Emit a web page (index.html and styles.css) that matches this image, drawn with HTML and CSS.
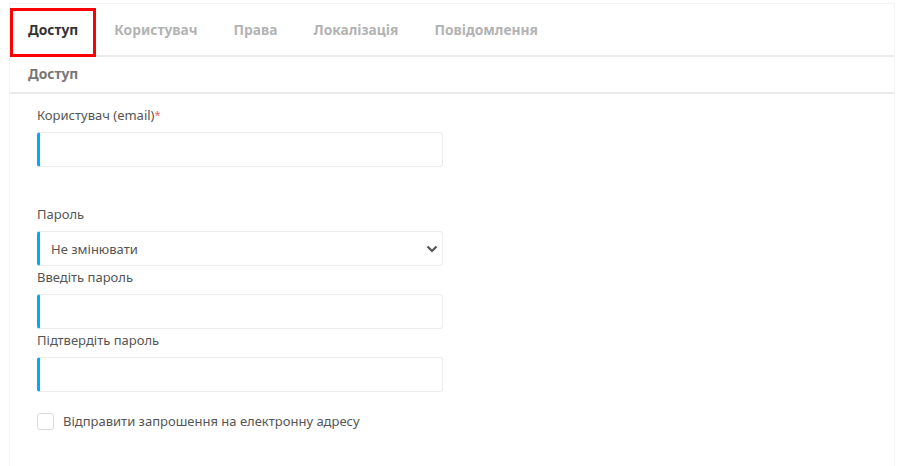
FILE: index.html
```html
<!DOCTYPE html>
<html lang="uk">
  <head>
    <meta charset="UTF-8" />
    <meta name="viewport" content="width=device-width, initial-scale=1.0" />
    <title>Доступ</title>
    <link rel="stylesheet" href="styles.css">
  </head>
  <body>
    <div class="card">
      <ul class="tabs">
        <li class="tab active">Доступ</li>
        <li class="tab">Користувач</li>
        <li class="tab">Права</li>
        <li class="tab">Локалізація</li>
        <li class="tab">Повідомлення</li>
      </ul>
      <div class="section-title">Доступ</div>
      <form class="form">
        <label class="field-label">Користувач (email)<span class="req">*</span></label>
        <input type="email" class="field" />

        <label class="field-label gap">Пароль</label>
        <div class="select-wrap">
          <select class="field">
            <option>Не змінювати</option>
            <option>Змінити</option>
          </select>
          <svg class="chevron" width="12" height="8" viewBox="0 0 12 8">
            <path d="M1.5 1.5 L6 6 L10.5 1.5" fill="none" stroke="#555" stroke-width="2.2" />
          </svg>
        </div>

        <label class="field-label tight">Введіть пароль</label>
        <input type="password" class="field" />

        <label class="field-label tight">Підтвердіть пароль</label>
        <input type="password" class="field" />

        <label class="check-row">
          <input type="checkbox" class="check" />
          Відправити запрошення на електронну адресу
        </label>
      </form>
    </div>
  </body>
</html>
```

FILE: styles.css
```css
body {
  margin: 0;
  background: #fff;
  font-family: "Noto Sans", "Open Sans", sans-serif;
  font-size: 13px;
  color: #555;
}

.card {
  margin: 3px 0 0 9px;
  width: 884px;
  border: 1px solid #f4f4f4;
  border-bottom: none;
  height: 470px;
}

.tabs {
  display: flex;
  list-style: none;
  margin: 0;
  padding: 0;
  border-bottom: 2px solid #ebebeb;
  height: 51px;
}

.tab {
  padding: 16px 18px 0;
  font-weight: bold;
  color: #b3b3b3;
  font-size: 13.8px;
}

.tab.active {
  color: #333;
  outline: 3px solid #ff0000;
  outline-offset: -3px;
  margin-top: 4px;
  padding-top: 12px;
  height: 37px;
}

.section-title {
  padding: 0 18px;
  height: 35px;
  line-height: 34px;
  font-weight: bold;
  font-size: 13.8px;
  color: #777;
  border-bottom: 2px solid #ebebeb;
}

.form {
  padding: 12px 27px 0;
  width: 406px;
}

.field-label {
  display: block;
  line-height: 18px;
  margin-bottom: 8px;
  color: #555;
}

.field-label.gap {
  margin-top: 38px;
}

.field-label.tight {
  margin-top: 2px;
}

.req {
  color: #f06060;
  font-size: 11px;
  vertical-align: top;
}

.field {
  display: block;
  box-sizing: border-box;
  width: 406px;
  height: 35px;
  border: 1px solid #ececec;
  border-left: 3px solid #00a8ff;
  border-radius: 3px;
  background: #fff;
  padding: 0 11px;
  font-family: inherit;
  font-size: 13px;
  color: #555;
}

.select-wrap {
  position: relative;
}

select.field {
  appearance: none;
  -webkit-appearance: none;
}

.chevron {
  position: absolute;
  right: 5px;
  top: 14px;
}

.check-row {
  display: flex;
  align-items: center;
  gap: 9px;
  margin-top: 20px;
  color: #555;
}

.check {
  appearance: none;
  -webkit-appearance: none;
  margin: 0;
  width: 17px;
  height: 17px;
  border: 1px solid #dcdcdc;
  border-radius: 3px;
  background: #fff;
}
```
